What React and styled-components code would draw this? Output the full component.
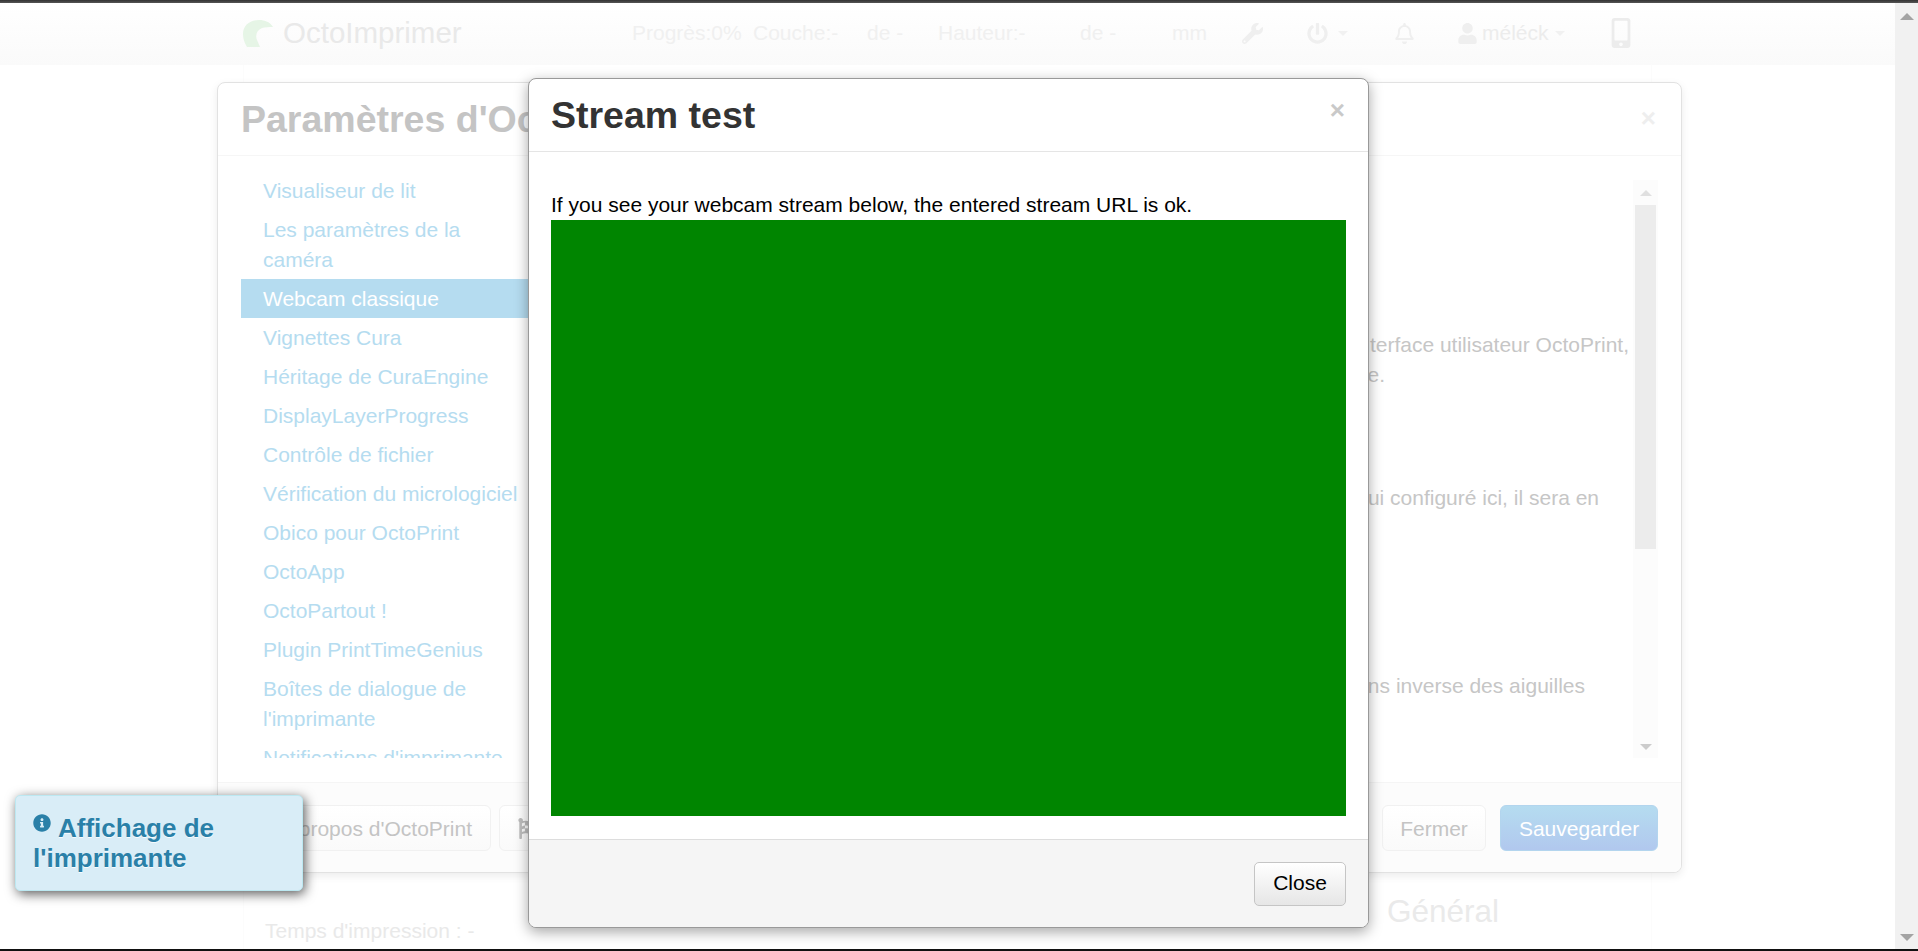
import React from 'react';
import styled, { createGlobalStyle } from 'styled-components';
import { FaWrench, FaPowerOff, FaRegBell, FaUser, FaMobileAlt, FaFlagCheckered, FaInfoCircle } from 'react-icons/fa';

const GlobalStyle = createGlobalStyle`
  html, body {
    margin: 0;
    padding: 0;
    height: 100%;
    overflow: hidden;
    background: #fff;
    font-family: "Liberation Sans", Arial, sans-serif;
  }
`;

const Screen = styled.div`
  width: 1918px;
  height: 951px;
  display: flex;
  flex-direction: column;
  background: #fff;
  overflow: hidden;
`;

const TopLine = styled.div`
  height: 3px;
  flex: none;
  background: linear-gradient(#333, #555);
`;

const BottomLine = styled.div`
  height: 2px;
  flex: none;
  background: #111;
`;

const Middle = styled.div`
  flex: 1;
  min-height: 0;
  display: flex;
`;

const Viewport = styled.div`
  position: relative;
  flex: 1;
  min-width: 0;
  display: flex;
  flex-direction: column;
  overflow: hidden;
`;

const PageScrollbar = styled.div`
  width: 23px;
  flex: none;
  background: #f1f1f1;
  display: flex;
  flex-direction: column;
  align-items: center;
  justify-content: space-between;
  padding: 10px 0 8px;
  box-sizing: border-box;
`;

const Arrow = styled.div`
  width: 0;
  height: 0;
  border-left: ${p => p.$size}px solid transparent;
  border-right: ${p => p.$size}px solid transparent;
  ${p => (p.$down ? 'border-top' : 'border-bottom')}: ${p => p.$size}px solid ${p => p.$color};
`;

const Navbar = styled.div`
  height: 62px;
  flex: none;
  background: linear-gradient(#fff, #fafafa);
  box-sizing: border-box;
  padding: 0 0 2px 243px;
  display: grid;
  grid-template-columns: 40px 349px 121px 114px 71px 142px 92px 70px 65px 31px 56px 63px 25px 73px 57px 30px;
  align-items: center;
`;

const Brand = styled.div`
  font-size: 29.5px;
  color: #e9e9e9;
  white-space: nowrap;
`;

const NavText = styled.div`
  font-size: 21px;
  color: ${p => p.$color || '#f0f0f0'};
  white-space: nowrap;
`;

const NavIcon = styled.div`
  display: flex;
  align-items: center;
  margin-left: ${p => p.$ml || 0}px;
  color: ${p => p.$color || '#efefef'};
  font-size: ${p => p.$size || 21}px;
`;

const Caret = styled.div`
  width: 0;
  height: 0;
  border-left: 5px solid transparent;
  border-right: 5px solid transparent;
  border-top: 5px solid #f1f1f1;
`;

const PageBody = styled.div`
  flex: 1;
  width: 1409px;
  margin-left: 243px;
  box-sizing: border-box;
  border-left: 1px solid #fcfcfc;
  border-right: 1px solid #fcfcfc;
  display: grid;
  grid-template-columns: 1143px 1fr;
`;

const PrintTime = styled.div`
  padding: 851px 0 0 21px;
  font-size: 21px;
  line-height: 30px;
  color: #e9e9e9;
`;

const SectionTitle = styled.div`
  padding-top: 828px;
  font-size: 31.5px;
  line-height: 36px;
  color: #eaeaea;
`;

const SettingsDialog = styled.div`
  position: absolute;
  left: 217px;
  top: 79px;
  width: 1465px;
  height: 791px;
  box-sizing: border-box;
  display: flex;
  flex-direction: column;
  background: #fff;
  border: 1px solid #e2e2e2;
  border-radius: 8px;
  box-shadow: 0 3px 8px rgba(0, 0, 0, 0.08);
  overflow: hidden;
`;

const SettingsHeader = styled.div`
  height: 73px;
  flex: none;
  box-sizing: border-box;
  padding: 0 25px 0 23px;
  display: flex;
  align-items: center;
  justify-content: space-between;
  border-bottom: 1px solid #f6f6f6;
`;

const SettingsTitle = styled.h3`
  margin: 0;
  font-size: 37.5px;
  font-weight: 700;
  color: #c4c4c4;
  white-space: nowrap;
`;

const CloseMark = styled.div`
  font-size: 26px;
  font-weight: 700;
  color: ${p => p.$color};
  line-height: 1;
  margin-top: ${p => p.$shift}px;
`;

const SettingsBody = styled.div`
  flex: 1;
  min-height: 0;
  padding: 24px 23px;
  display: flex;
`;

const Sidebar = styled.div`
  width: 340px;
  flex: none;
  overflow: hidden;
`;

const NavList = styled.ul`
  list-style: none;
  margin: -9px 0 0;
  padding: 0;
`;

const NavEntry = styled.li`
  padding: 4.5px 22px;
  font-size: 21px;
  line-height: 30px;
  white-space: nowrap;
  color: ${p => (p.$active ? '#fff' : '#b5dcf0')};
  background: ${p => (p.$active ? '#b5dcf0' : 'transparent')};
`;

const Pane = styled.div`
  flex: 1;
  min-width: 0;
  display: flex;
`;

const PaneText = styled.div`
  flex: 1;
  min-width: 0;
  overflow: hidden;
`;

const HelpLine = styled.div`
  margin-top: ${p => p.$top || 0}px;
  padding-right: ${p => p.$end}px;
  display: flex;
  justify-content: flex-end;
  font-size: 21px;
  line-height: 30px;
  color: #c6c6c6;
  white-space: nowrap;
`;

const PaneScrollbar = styled.div`
  width: 25px;
  flex: none;
  background: #fcfcfc;
  display: flex;
  flex-direction: column;
  align-items: center;
  padding: 10px 0 8px;
  box-sizing: border-box;
`;

const PaneThumb = styled.div`
  width: 21px;
  height: 344px;
  margin: 9px 0 auto;
  flex: none;
  background: #ececec;
`;

const SettingsFooter = styled.div`
  height: 90px;
  flex: none;
  box-sizing: border-box;
  padding: 0 23px;
  display: flex;
  align-items: center;
  gap: 8px;
  background: #fcfcfc;
  border-top: 1px solid #f5f5f5;
`;

const FadedButton = styled.div`
  height: 46px;
  box-sizing: border-box;
  width: ${p => p.$w}px;
  margin-left: ${p => (p.$push ? 'auto' : '0')};
  padding: 2px 18px 0;
  display: flex;
  align-items: center;
  justify-content: ${p => p.$justify || 'center'};
  gap: 8px;
  flex: none;
  font-size: 21px;
  white-space: nowrap;
  color: #c4c4c4;
  background: linear-gradient(#fff, #fafafa);
  border: 1px solid #f1f1f1;
  border-radius: 6px;
`;

const SaveButton = styled.div`
  height: 46px;
  width: 158px;
  margin-left: 6px;
  padding-top: 2px;
  flex: none;
  box-sizing: border-box;
  display: flex;
  align-items: center;
  justify-content: center;
  font-size: 21px;
  color: #fff;
  background: linear-gradient(#b5dcf0, #b1c8ee);
  border: 1px solid #b3d5ee;
  border-radius: 6px;
`;

const Modal = styled.div`
  position: absolute;
  left: 528px;
  top: 75px;
  width: 841px;
  height: 850px;
  box-sizing: border-box;
  display: flex;
  flex-direction: column;
  background: #fff;
  border: 1px solid #999;
  border-radius: 8px;
  box-shadow: 0 4px 14px rgba(0, 0, 0, 0.35);
  overflow: hidden;
`;

const ModalHeader = styled.div`
  height: 72px;
  flex: none;
  box-sizing: border-box;
  padding: 0 23px 0 22px;
  display: flex;
  align-items: center;
  justify-content: space-between;
`;

const ModalTitle = styled.h3`
  margin: 0;
  font-size: 37.5px;
  font-weight: 700;
  color: #333;
`;

const ModalBody = styled.div`
  flex: 1;
  min-height: 0;
  padding: 38px 22px 23px;
  display: flex;
  flex-direction: column;
  border-top: 1px solid #e5e5e5;
`;

const ModalText = styled.div`
  font-size: 21px;
  line-height: 30px;
  color: #000;
`;

const StreamArea = styled.div`
  flex: 1;
  background: #008500;
`;

const ModalFooter = styled.div`
  height: 88px;
  flex: none;
  box-sizing: border-box;
  padding: 0 22px;
  display: flex;
  align-items: center;
  justify-content: flex-end;
  background: #f5f5f5;
  border-top: 1px solid #ddd;
`;

const CloseButton = styled.div`
  width: 92px;
  height: 44px;
  padding-bottom: 2px;
  box-sizing: border-box;
  display: flex;
  align-items: center;
  justify-content: center;
  font-size: 21px;
  color: #000;
  background: linear-gradient(#fff, #e6e6e6);
  border: 1px solid #c5c5c5;
  border-radius: 5px;
`;

const Notice = styled.div`
  position: absolute;
  left: 15px;
  top: 792px;
  width: 288px;
  height: 96px;
  box-sizing: border-box;
  padding: 17px 17px 0;
  font-size: 26px;
  line-height: 30px;
  font-weight: 700;
  color: #2a80a8;
  text-shadow: 0 1px 0 rgba(255, 255, 255, 0.8);
  background: #d9edf7;
  border: 1px solid #bce8f1;
  border-radius: 5px;
  box-shadow: 2px 3px 12px rgba(0, 0, 0, 0.65);
`;

const NoticeIcon = styled(FaInfoCircle)`
  font-size: 18px;
  margin-right: 7px;
  vertical-align: 5px;
`;

const Logo = () => (
  <svg width="30" height="27" viewBox="0 0 30 27">
    <path
      d="M4 27C1 22 0 18 0 14C0 5 7 0 16 0C22 0 27 2 30 7C26 7 22 7 19 8C14 10 12 15 14 20L17 27Z"
      fill="#e6f5e6"
    />
  </svg>
);

const entries = [
  ['Visualiseur de lit'],
  ['Les paramètres de la', 'caméra'],
  ['Webcam classique'],
  ['Vignettes Cura'],
  ['Héritage de CuraEngine'],
  ['DisplayLayerProgress'],
  ['Contrôle de fichier'],
  ['Vérification du micrologiciel'],
  ['Obico pour OctoPrint'],
  ['OctoApp'],
  ['OctoPartout !'],
  ['Plugin PrintTimeGenius'],
  ['Boîtes de dialogue de', "l'imprimante"],
  ["Notifications d'imprimante"],
];

export default function App() {
  return (
    <Screen>
      <GlobalStyle />
      <TopLine />
      <Middle>
        <Viewport>
          <Navbar>
            <Logo />
            <Brand>OctoImprimer</Brand>
            <NavText>Progrès:0%</NavText>
            <NavText>Couche:-</NavText>
            <NavText>de -</NavText>
            <NavText>Hauteur:-</NavText>
            <NavText>de -</NavText>
            <NavText>mm</NavText>
            <NavIcon><FaWrench /></NavIcon>
            <NavIcon><FaPowerOff /></NavIcon>
            <Caret />
            <NavIcon><FaRegBell /></NavIcon>
            <NavIcon><FaUser /></NavIcon>
            <NavText $color="#ececec">méléck</NavText>
            <Caret />
            <NavIcon $size={30} $ml={-6} $color="#ececec"><FaMobileAlt /></NavIcon>
          </Navbar>
          <PageBody>
            <PrintTime>Temps d'impression : -</PrintTime>
            <SectionTitle>Général</SectionTitle>
          </PageBody>

          <SettingsDialog>
            <SettingsHeader>
              <SettingsTitle>Paramètres d'OctoPrint</SettingsTitle>
              <CloseMark $color="#eeeeee" $shift={-2}>×</CloseMark>
            </SettingsHeader>
            <SettingsBody>
              <Sidebar>
                <NavList>
                  {entries.map((lines, i) => (
                    <NavEntry key={lines[0]} $active={i === 2}>
                      {lines.map(line => <div key={line}>{line}</div>)}
                    </NavEntry>
                  ))}
                </NavList>
              </Sidebar>
              <Pane>
                <PaneText>
                  <HelpLine $top={150} $end={4}>l'interface utilisateur OctoPrint,</HelpLine>
                  <HelpLine $end={248}>page.</HelpLine>
                  <HelpLine $top={93} $end={34}>lui configuré ici, il sera en</HelpLine>
                  <HelpLine $top={158} $end={48}>dans le sens inverse des aiguilles</HelpLine>
                </PaneText>
                <PaneScrollbar>
                  <Arrow $size={6} $color="#e0e0e0" />
                  <PaneThumb />
                  <Arrow $size={6} $down $color="#cccccc" />
                </PaneScrollbar>
              </Pane>
            </SettingsBody>
            <SettingsFooter>
              <FadedButton $w={250} $justify="flex-end">À propos d'OctoPrint</FadedButton>
              <FadedButton $w={240} $justify="flex-start"><FaFlagCheckered color="#bdbdbd" />Système</FadedButton>
              <FadedButton $w={104} $push>Fermer</FadedButton>
              <SaveButton>Sauvegarder</SaveButton>
            </SettingsFooter>
          </SettingsDialog>

          <Modal>
            <ModalHeader>
              <ModalTitle>Stream test</ModalTitle>
              <CloseMark $color="#c9c9c9" $shift={-10}>×</CloseMark>
            </ModalHeader>
            <ModalBody>
              <ModalText>If you see your webcam stream below, the entered stream URL is ok.</ModalText>
              <StreamArea />
            </ModalBody>
            <ModalFooter>
              <CloseButton>Close</CloseButton>
            </ModalFooter>
          </Modal>

          <Notice><NoticeIcon />Affichage de l'imprimante</Notice>
        </Viewport>
        <PageScrollbar>
          <Arrow $size={7} $color="#a3a3a3" />
          <Arrow $size={7} $down $color="#a3a3a3" />
        </PageScrollbar>
      </Middle>
      <BottomLine />
    </Screen>
  );
}
